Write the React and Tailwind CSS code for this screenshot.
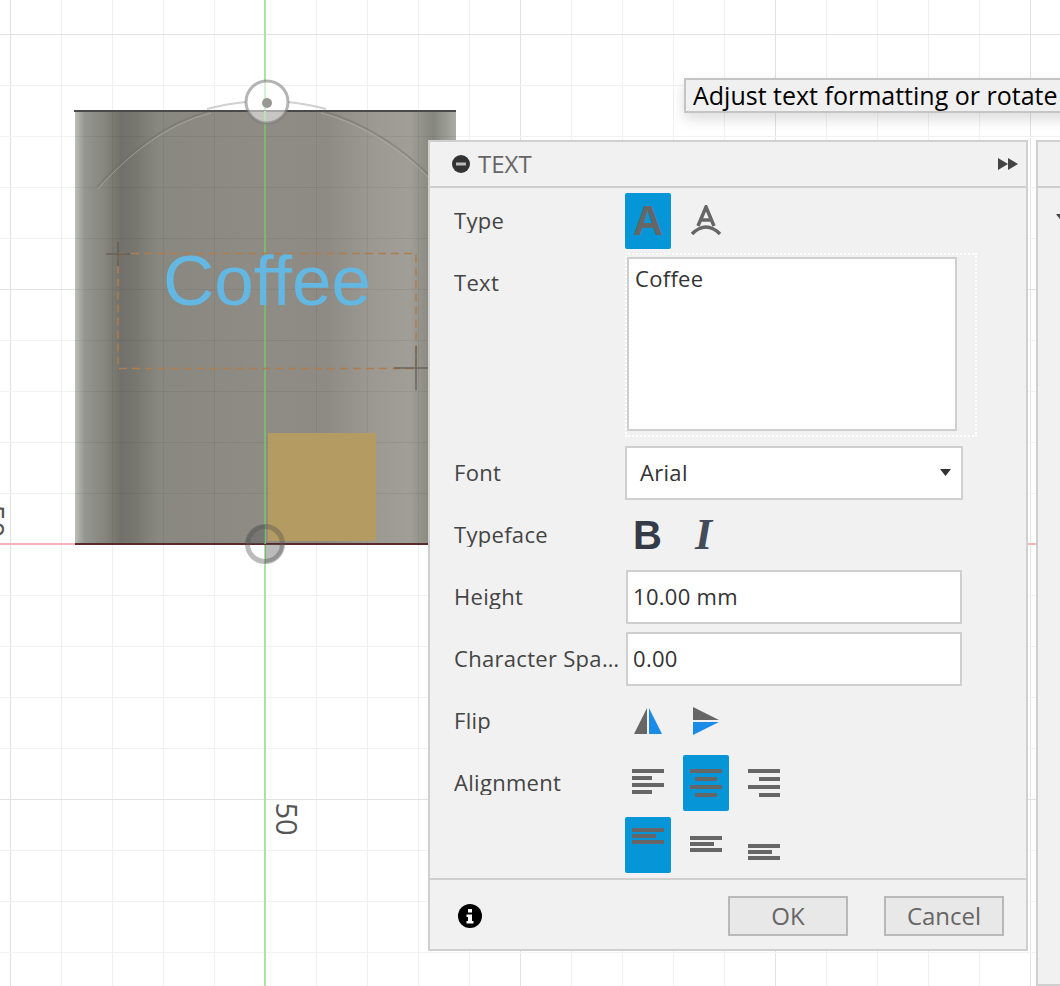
const gridX = Array.from({ length: 21 }, (_, i) => 10 + i * 51);
const gridY = Array.from({ length: 19 }, (_, i) => 34 + i * 51);

function Viewport() {
  return (
    <svg className="absolute inset-0" width="1060" height="986" viewBox="0 0 1060 986">
      <defs>
        <linearGradient id="body" x1="75" x2="456" y1="0" y2="0" gradientUnits="userSpaceOnUse">
          <stop offset="0" stopColor="#bcbeb8" />
          <stop offset="0.025" stopColor="#959690" />
          <stop offset="0.08" stopColor="#85857d" />
          <stop offset="0.12" stopColor="#71706a" />
          <stop offset="0.16" stopColor="#777770" />
          <stop offset="0.22" stopColor="#898880" />
          <stop offset="0.5" stopColor="#8e8c85" />
          <stop offset="0.66" stopColor="#8d8b83" />
          <stop offset="0.78" stopColor="#9b9991" />
          <stop offset="0.88" stopColor="#a09e96" />
          <stop offset="0.94" stopColor="#85867e" />
          <stop offset="1" stopColor="#aaaba4" />
        </linearGradient>
      </defs>
      <rect width="1060" height="986" fill="#fff" />
      {gridX.map((x, i) => (
        <line key={x} x1={x + 0.5} x2={x + 0.5} y1="0" y2="986" stroke={i % 5 === 0 ? '#e2e2e4' : '#f0f0f1'} />
      ))}
      {gridY.map((y, i) => (
        <line key={y} x1="0" x2="1060" y1={y + 0.5} y2={y + 0.5} stroke={i % 5 === 0 ? '#e2e2e4' : '#f2f2f3'} />
      ))}
      <line x1="0" x2="75" y1="544" y2="544" stroke="#f7b4b8" strokeWidth="2" />
      <line x1="456" x2="1060" y1="544" y2="544" stroke="#f7b4b8" strokeWidth="2" />
      <line x1="265" x2="265" y1="0" y2="986" stroke="#a8e6a0" strokeWidth="2" />
      <path d="M 207 109 Q 225 104 246 102 M 288 102 Q 308 104 326 109" fill="none" stroke="#d0d0d0" strokeWidth="2" />

      <rect x="75" y="111" width="381" height="433" fill="url(#body)" />
      {gridX.map((x) => x > 75 && x < 456 ? <line key={x} x1={x + 0.5} x2={x + 0.5} y1="111" y2="544" stroke="#000" strokeOpacity="0.05" /> : null)}
      {gridY.map((y) => y > 111 && y < 544 ? <line key={y} x1="75" x2="456" y1={y + 0.5} y2={y + 0.5} stroke="#000" strokeOpacity="0.05" /> : null)}
      <path d="M 97 187 C 125 155 165 122 210 111 M 322 111 C 365 122 405 150 432 178" fill="none" stroke="#6c6c66" strokeOpacity="0.45" strokeWidth="1.5" />
      <path d="M 98 189 C 126 157 166 124 211 113 M 321 113 C 364 124 404 152 431 180" fill="none" stroke="#b4b4ad" strokeOpacity="0.6" strokeWidth="1" />
      <line x1="74" x2="456" y1="111" y2="111" stroke="#4a4a48" strokeWidth="2" />
      <line x1="75" x2="456" y1="544" y2="544" stroke="#5a2a2a" strokeWidth="2" />
      <line x1="265" x2="265" y1="111" y2="544" stroke="#7cb870" strokeWidth="2" />

      <rect x="268" y="433" width="108" height="108" fill="#b39b62" />
      <text x="163" y="305" fontFamily="'Liberation Sans', sans-serif" fontSize="71" fill="#62b8e3">Coffee</text>
      <rect x="118" y="253.5" width="298" height="115" fill="none" stroke="#b07d4f" strokeWidth="1.5" strokeDasharray="8 5" />
      <path d="M 106 254 H 130 M 118 242 V 266 M 394 368 H 428 M 416 346 V 390" fill="none" stroke="#5e5a50" strokeOpacity="0.8" strokeWidth="1.5" />

      <circle cx="267" cy="102" r="21" fill="#fff" fillOpacity="0.5" stroke="#777" strokeOpacity="0.55" strokeWidth="3" />
      <circle cx="267" cy="103" r="5" fill="#999994" />
      <path d="M 265 544 H 246 A 19 19 0 0 1 265 525 Z M 265 544 H 284 A 19 19 0 0 1 265 563 Z" fill="#555" fillOpacity="0.4" />
      <circle cx="265" cy="544" r="17.5" fill="none" stroke="#555" strokeOpacity="0.4" strokeWidth="5" />

      <text x="287" y="819" textAnchor="middle" dominantBaseline="central" transform="rotate(90 287 819)" fontFamily="'Open Sans', sans-serif" fontSize="29" fill="#555">50</text>
      <text x="-6" y="521" textAnchor="middle" dominantBaseline="central" transform="rotate(90 -6 521)" fontFamily="'Open Sans', sans-serif" fontSize="29" fill="#555">50</text>
    </svg>
  );
}

function Tile({ active, className = '', children }) {
  return (
    <div className={`flex h-14 w-[46px] shrink-0 items-center justify-center rounded-[2px] ${active ? 'bg-[#0696d7]' : ''} ${className}`}>
      {children}
    </div>
  );
}

function Lines({ rows, align = 'left', gap = 3, pad = 0 }) {
  return (
    <div
      className={`flex h-full w-8 flex-col ${align === 'left' ? 'items-start' : align === 'right' ? 'items-end' : 'items-center'}`}
      style={{ gap, paddingTop: pad }}
    >
      {rows.map((w, i) => (
        <div key={i} className="h-1 bg-[#666]" style={{ width: w }} />
      ))}
    </div>
  );
}

function Row({ label, children }) {
  return (
    <div className="flex h-[62px] items-center">
      <div className="w-[171px] shrink-0 truncate pb-[2px] pr-[2px]">{label}</div>
      {children}
    </div>
  );
}

function Field({ value }) {
  return (
    <div className="ml-px flex h-[54px] w-[336px] items-center border-2 border-[#cfcfcf] bg-white pb-[2px] pl-[5px] text-[#333]">
      {value}
    </div>
  );
}

function TextPanel() {
  return (
    <div className="absolute left-[428px] top-[140px] w-[600px] bg-[#f1f1f1] text-[22px] leading-none tracking-[0.3px] text-[#444] [font-family:'Open_Sans',sans-serif]">
      <div className="flex h-[48px] items-center border-2 border-[#cfcfcf] pl-[22px] pr-2 text-[#666]">
        <svg width="18" height="18" viewBox="0 0 18 18">
          <circle cx="9" cy="9" r="9" fill="#333" />
          <rect x="4" y="7.5" width="10" height="3" fill="#bbb" />
        </svg>
        <span className="ml-2 flex-1 text-[24px] tracking-normal">TEXT</span>
        <svg width="20" height="12" viewBox="0 0 20 12">
          <path d="M0 0 L10 6 L0 12 Z M10 0 L20 6 L10 12 Z" fill="#444" />
        </svg>
      </div>

      <div className="border-x-2 border-[#cfcfcf] pl-6 pt-[2px]">
        <Row label="Type">
          <Tile active>
            <span className="text-[42px] font-bold text-[#666] [font-family:'Liberation_Sans',sans-serif]">A</span>
          </Tile>
          <Tile className="ml-3">
            <svg width="32" height="32" viewBox="0 0 32 32" fill="none" stroke="#666">
              <path d="M8 21 L16 2 L24 21 M11 15 H21" strokeWidth="3.5" />
              <path d="M2 29 Q16 15 30 29" strokeWidth="3.5" />
            </svg>
          </Tile>
        </Row>

        <div className="flex h-[190px]">
          <div className="w-[171px] shrink-0 pt-[19px]">Text</div>
          <div className="mt-px h-[184px] w-[352px] border-2 border-dotted border-white pt-[2px]">
            <div className="h-[174px] w-[330px] border-2 border-[#cfcfcf] bg-white px-[6px] pt-[8px] text-[#333]">Coffee</div>
          </div>
        </div>

        <Row label="Font">
          <div className="flex h-[54px] w-[338px] items-center justify-between border-2 border-[#cfcfcf] bg-white pb-[2px] pl-[13px] pr-[10px] text-[#333]">
            Arial
            <svg width="11" height="7" viewBox="0 0 11 7"><path d="M0 0 H11 L5.5 7 Z" fill="#333" /></svg>
          </div>
        </Row>

        <Row label="Typeface">
          <span className="ml-[8px] w-[62px] text-[40px] font-bold tracking-normal text-[#333b48] [font-family:'Liberation_Sans',sans-serif]">B</span>
          <span className="text-[44px] font-bold italic tracking-normal text-[#444b58] [font-family:'Liberation_Serif',serif]">I</span>
        </Row>

        <Row label="Height"><Field value="10.00 mm" /></Row>
        <Row label="Character Spacing"><Field value="0.00" /></Row>

        <Row label="Flip">
          <svg className="ml-[9px]" width="28" height="26" viewBox="0 0 28 26">
            <path d="M0 26 L13 0 V26 Z" fill="#666" />
            <path d="M15 0 L28 26 H15 Z" fill="#1a8ce8" />
          </svg>
          <svg className="ml-[31px]" width="26" height="28" viewBox="0 0 26 28">
            <path d="M0 0 L26 13 H0 Z" fill="#666" />
            <path d="M0 15 H26 L0 28 Z" fill="#1a8ce8" />
          </svg>
        </Row>

        <Row label="Alignment">
          <div className="flex gap-3">
            <Tile><div className="h-[29px] w-8"><Lines rows={[32, 20, 32, 20]} pad={0} /></div></Tile>
            <Tile active><div className="h-[28px] w-8"><Lines rows={[32, 22, 32, 22]} align="center" gap={4} /></div></Tile>
            <Tile><div className="h-[28px] w-8"><Lines rows={[32, 21, 32, 21]} align="right" gap={4} /></div></Tile>
          </div>
        </Row>

        <div className="flex h-[62px] items-center pl-[171px]">
          <div className="flex gap-3">
            <Tile active><div className="h-14 w-8"><Lines rows={[32, 24, 32]} gap={2} pad={11} /></div></Tile>
            <Tile><div className="h-14 w-8"><Lines rows={[32, 24, 32]} gap={2} pad={19} /></div></Tile>
            <Tile><div className="h-14 w-8"><Lines rows={[32, 24, 32]} gap={2} pad={27} /></div></Tile>
          </div>
        </div>
        <div className="h-[2px]" />
      </div>

      <div className="flex h-[73px] items-center border-2 border-[#cfcfcf] pl-[28px] pr-[22px] pt-[3px] text-[#666]">
        <svg width="24" height="24" viewBox="0 0 24 24">
          <circle cx="12" cy="12" r="12" fill="#000" />
          <rect x="10" y="5" width="4" height="3.5" fill="#fff" />
          <path d="M8.5 10.5 H14 V17 H15.5 V19.5 H8.5 V17 H10 V13 H8.5 Z" fill="#fff" />
        </svg>
        <div className="ml-auto flex gap-[36px] text-[24px] tracking-normal">
          <button className="h-10 w-[120px] border-2 border-[#b9b9b9] bg-[#e8e8e8]">OK</button>
          <button className="h-10 w-[120px] border-2 border-[#b9b9b9] bg-[#e8e8e8]">Cancel</button>
        </div>
      </div>
    </div>
  );
}

export default function App() {
  return (
    <div className="relative h-[986px] w-[1060px] overflow-hidden bg-white">
      <Viewport />

      {/* tooltip */}
      <div className="absolute left-[684px] top-[78px] flex h-[35px] w-[420px] items-center whitespace-nowrap border-2 border-[#c4c4c4] bg-[#f0f0f0] pl-[7px] text-[25px] leading-none text-black shadow-[0_6px_14px_rgba(0,0,0,0.14)] [font-family:'Open_Sans',sans-serif]">
        Adjust text formatting or rotate
      </div>

      <TextPanel />

      {/* next panel, cut off by the window */}
      <div className="absolute left-[1036px] top-[140px] h-[846px] w-[40px] border-2 border-[#cfcfcf] bg-[#f1f1f1]">
        <div className="h-[46px] border-b-2 border-[#cfcfcf]" />
        <svg className="ml-[18px] mt-[26px]" width="12" height="8" viewBox="0 0 12 8"><path d="M0 0 H12 L6 8 Z" fill="#444" /></svg>
      </div>
    </div>
  );
}
